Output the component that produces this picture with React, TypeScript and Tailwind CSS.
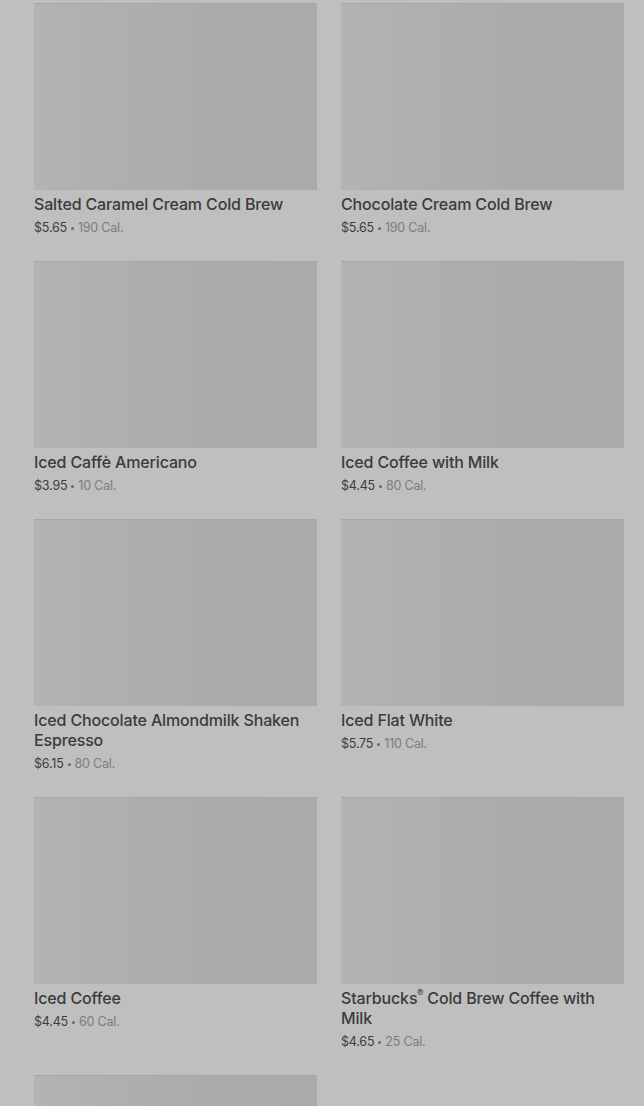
import React from 'react';

type Item = {
  name: React.ReactNode;
  price: string;
  cal: string;
};

const items: Item[] = [
  { name: 'Salted Caramel Cream Cold Brew', price: '$5.65', cal: '190 Cal.' },
  { name: 'Chocolate Cream Cold Brew', price: '$5.65', cal: '190 Cal.' },
  { name: 'Iced Caffè Americano', price: '$3.95', cal: '10 Cal.' },
  { name: 'Iced Coffee with Milk', price: '$4.45', cal: '80 Cal.' },
  { name: 'Iced Chocolate Almondmilk Shaken Espresso', price: '$6.15', cal: '80 Cal.' },
  { name: 'Iced Flat White', price: '$5.75', cal: '110 Cal.' },
  { name: 'Iced Coffee', price: '$4.45', cal: '60 Cal.' },
  {
    name: (
      <>
        Starbucks<span className="align-text-top text-[9px] leading-none">®</span> Cold Brew Coffee with Milk
      </>
    ),
    price: '$4.65',
    cal: '25 Cal.',
  },
  { name: '', price: '', cal: '' },
];

const MenuCard: React.FC<{ item: Item }> = ({ item }) => (
  <div className="flex flex-col">
    <div className="h-[187px] w-full border-t border-[#a6a6a6] bg-linear-to-r from-[#b3b3b3] via-[#acacac] to-[#aaaaaa]" />
    {item.price && (
      <>
        <h3 className="mt-1 text-[16px] leading-5 font-medium tracking-[-0.15px] text-[#3b3b3b]">{item.name}</h3>
        <p className="mt-[3px] flex h-5 items-center pt-[2px] text-[12.5px] leading-5 tracking-[-0.2px] text-[#3d3d3d]">
          <span>{item.price}</span>
          <span className="mx-[4px] inline-block h-[3px] w-[3px] rounded-full bg-[#6a6a6a]" />
          <span className="text-[#7c7c7c]">{item.cal}</span>
        </p>
      </>
    )}
  </div>
);

const App: React.FC = () => {
  return (
    <div
      className="min-h-[1106px] bg-[#bfbfbf] pt-[3px] pl-[34px] pr-[20px]"
      style={{ fontFamily: 'Inter, "Noto Sans", sans-serif' }}
    >
      <div className="grid grid-cols-2 gap-x-6 gap-y-6">
        {items.map((item, i) => (
          <MenuCard key={i} item={item} />
        ))}
      </div>
    </div>
  );
};

export default App;
